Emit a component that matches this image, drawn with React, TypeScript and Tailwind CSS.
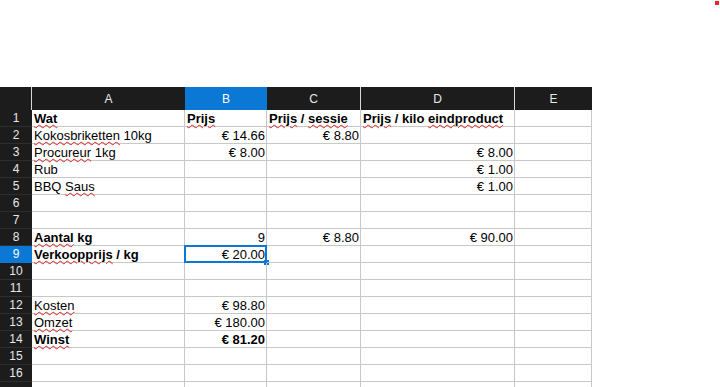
import React from 'react';

type Cell = { text?: React.ReactNode; right?: boolean; bold?: boolean };

// column widths: row header, A, B, C, D, E
const cols = 'grid-cols-[32px_153px_82px_94px_154px_77px]';

// red spellcheck squiggle under a word
function Sp({ children }: { children: React.ReactNode }) {
  return (
    <span className="underline decoration-wavy decoration-[#e02020] decoration-1 underline-offset-[1px]">
      {children}
    </span>
  );
}

const rows: Cell[][] = [
  [
    { text: <Sp>Wat</Sp>, bold: true },
    { text: <Sp>Prijs</Sp>, bold: true },
    { text: <><Sp>Prijs</Sp> / <Sp>sessie</Sp></>, bold: true },
    { text: <><Sp>Prijs</Sp> / kilo <Sp>eindproduct</Sp></>, bold: true },
    {},
  ],
  [{ text: <><Sp>Kokosbriketten</Sp> 10kg</> }, { text: '€ 14.66', right: true }, { text: '€ 8.80', right: true }, {}, {}],
  [{ text: <><Sp>Procureur</Sp> 1kg</> }, { text: '€ 8.00', right: true }, {}, { text: '€ 8.00', right: true }, {}],
  [{ text: 'Rub' }, {}, {}, { text: '€ 1.00', right: true }, {}],
  [{ text: <>BBQ <Sp>Saus</Sp></> }, {}, {}, { text: '€ 1.00', right: true }, {}],
  [{}, {}, {}, {}, {}],
  [{}, {}, {}, {}, {}],
  [
    { text: <><Sp>Aantal</Sp> kg</>, bold: true },
    { text: '9', right: true },
    { text: '€ 8.80', right: true },
    { text: '€ 90.00', right: true },
    {},
  ],
  [{ text: <><Sp>Verkoopprijs</Sp> / kg</>, bold: true }, { text: '€ 20.00', right: true }, {}, {}, {}],
  [{}, {}, {}, {}, {}],
  [{}, {}, {}, {}, {}],
  [{ text: <Sp>Kosten</Sp> }, { text: '€ 98.80', right: true }, {}, {}, {}],
  [{ text: <Sp>Omzet</Sp> }, { text: '€ 180.00', right: true }, {}, {}, {}],
  [{ text: <Sp>Winst</Sp>, bold: true }, { text: '€ 81.20', right: true, bold: true }, {}, {}, {}],
  [{}, {}, {}, {}, {}],
  [{}, {}, {}, {}, {}],
  [{}, {}, {}, {}, {}],
];

const letters = ['A', 'B', 'C', 'D', 'E'];

export default function App() {
  return (
    <div
      className="relative h-[387px] w-[720px] overflow-hidden bg-white text-black"
      style={{ fontFamily: '"Liberation Sans", Arial, sans-serif' }}
    >
      {/* autosave marker top right */}
      <div className="absolute right-[1px] top-[1px] h-[4px] w-[4px] bg-[#e8262a]" />

      <div className="h-[87px]" />

      <div className={`grid w-[592px] ${cols}`}>
        {/* column headers */}
        <div className="h-[23px] border-r border-[#d8d8d8] bg-[#1c1c1c]" />
        {letters.map((l) => (
          <div
            key={l}
            className={`flex h-[23px] items-center justify-center text-[12px] ${
              l === 'B' ? 'bg-[#0a78d4] text-white' : 'bg-[#1c1c1c] text-[#e8e8e8]'
            } ${l === 'C' || l === 'D' ? 'border-r border-[#d8d8d8]' : ''}`}
          >
            {l}
          </div>
        ))}

        {rows.map((row, i) => {
          const n = i + 1;
          const sel = n === 9;
          return (
            <React.Fragment key={n}>
              <div
                className={`flex h-[17px] items-center justify-center border-b text-[12px] ${
                  sel ? 'border-[#0a78d4] bg-[#0a78d4] text-white' : 'border-[#2e2e2e] bg-[#1c1c1c] text-[#e8e8e8]'
                }`}
              >
                {n < 17 ? n : ''}
              </div>
              {row.map((c, j) => (
                <div
                  key={j}
                  className={`relative h-[17px] whitespace-nowrap border-b border-r border-[#c8c8c8] px-[2px] pt-[1px] text-[13px] leading-[15px] ${
                    c.right ? 'pr-[1px] text-right' : ''
                  } ${c.bold ? 'font-bold' : ''}`}
                >
                  <span>{c.text}</span>
                  {sel && j === 1 && (
                    <>
                      <div className="pointer-events-none absolute inset-[-1px] border-2 border-[#0a78d4]" />
                      <div className="absolute bottom-[-3px] right-[-3px] h-[5px] w-[5px] bg-[#0a78d4]" />
                    </>
                  )}
                </div>
              ))}
            </React.Fragment>
          );
        })}
      </div>
    </div>
  );
}
